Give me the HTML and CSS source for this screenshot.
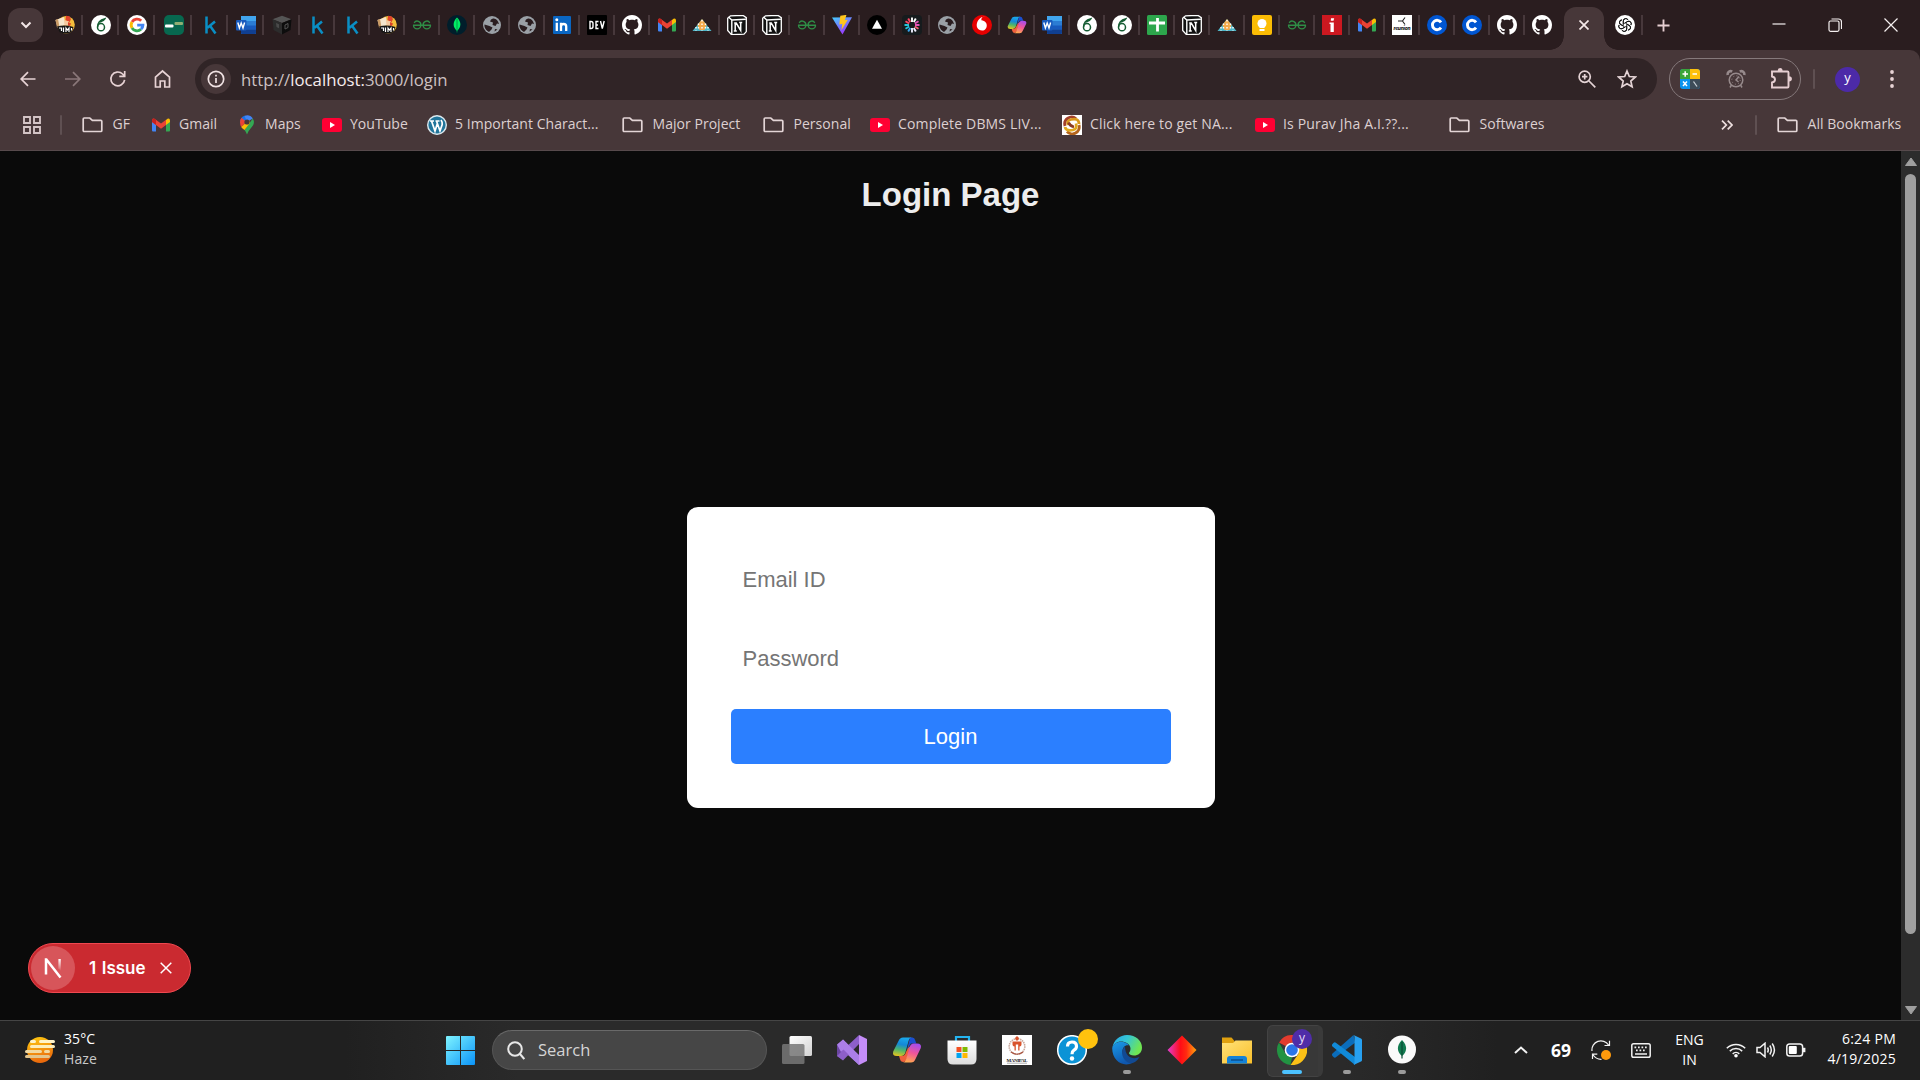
FILE: index.html
```html
<!DOCTYPE html>
<html lang="en">
<head>
<meta charset="utf-8">
<title>Login</title>
<link rel="stylesheet" href="styles.css">
</head>
<body>
<svg class="defs" aria-hidden="true">
  <defs>
    <linearGradient id="g-sky" x1="0" y1="0" x2="1" y2="1"><stop offset="0" stop-color="#7ff4ff"/><stop offset="1" stop-color="#0a93f8"/></linearGradient>
    <linearGradient id="g-sun" x1="0" y1="0" x2="0.3" y2="1"><stop offset="0" stop-color="#ffce12"/><stop offset="1" stop-color="#ea6a0c"/></linearGradient>
    <linearGradient id="g-cop1" x1="0.4" y1="0" x2="0.2" y2="1"><stop offset="0" stop-color="#1aa7ea"/><stop offset=".35" stop-color="#1488d8"/><stop offset=".65" stop-color="#4fb56a"/><stop offset="1" stop-color="#e8c51c"/></linearGradient>
    <linearGradient id="g-cop2" x1="0.7" y1="0" x2="0.4" y2="1"><stop offset="0" stop-color="#a44cf0"/><stop offset=".5" stop-color="#f0559a"/><stop offset="1" stop-color="#ffa650"/></linearGradient>
    <linearGradient id="g-vite" x1="0" y1="0" x2="0.6" y2="1"><stop offset="0" stop-color="#41d1ff"/><stop offset="1" stop-color="#a030fe"/></linearGradient>
    <linearGradient id="g-edge1" x1="0" y1="0" x2="1" y2="0.4"><stop offset="0" stop-color="#26a6ea"/><stop offset=".5" stop-color="#35c6d4"/><stop offset="1" stop-color="#6fe653"/></linearGradient>
    <linearGradient id="g-edge2" x1="0" y1="0" x2="0.4" y2="1"><stop offset="0" stop-color="#1a9be8"/><stop offset="1" stop-color="#0f57ae"/></linearGradient>
    <linearGradient id="g-dia"><stop offset="0" stop-color="#e23dd0"/><stop offset=".45" stop-color="#ff0d16"/><stop offset=".65" stop-color="#ff2a10"/><stop offset="1" stop-color="#ffa60c"/></linearGradient>
    <linearGradient id="g-fold" x1="0" y1="0" x2="1" y2="1"><stop offset="0" stop-color="#ffe27a"/><stop offset="1" stop-color="#f9bf2b"/></linearGradient>
    <linearGradient id="g-bag" x1="0" y1="0" x2="0" y2="1"><stop offset="0" stop-color="#ffffff"/><stop offset="1" stop-color="#dcdcdc"/></linearGradient>
    <linearGradient id="g-n" x1="0" y1="0" x2="0" y2="1"><stop offset="0" stop-color="#fff"/><stop offset="1" stop-color="#fff" stop-opacity="0"/></linearGradient>
    <linearGradient id="g-tv" x1="0" y1="0" x2="1" y2="1"><stop offset="0" stop-color="#fff"/><stop offset="1" stop-color="#d2d2d2"/></linearGradient>
  </defs>

  <symbol id="i-cartoon" viewBox="0 0 20 20"><circle cx="11" cy="9.800" r="8.800" fill="#f3bd3c"/><path d="M.5 5L9 2l1.500 8-8 2.500z" fill="#f5e6cd"/><path d="M.5 5L3 4l1.500 8-2.500.5z" fill="#c99a64"/><path d="M11 .8l3.500.5 1.500 3-1.500 3-4-2z" fill="#e0432b"/><path d="M9 5l5 1.500-.5 4.500-4-.5z" fill="#f4c9a0"/><path d="M13 7l3 1.500-1 2.500-2-.5z" fill="#d8402a"/><path d="M2 11.500q8-2 16.500.5l-2 5q-6 3-12 0z" fill="#151515"/><path d="M4 13h2.500v3M8.500 12.500v4.500M11 17v-4l1.500 2 1.500-2v4M16.500 13v2.500" fill="none" stroke="#fff" stroke-width="1.200"/></symbol>
  <symbol id="i-six" viewBox="0 0 20 20"><circle cx="10" cy="10" r="10" fill="#fff"/><ellipse cx="10" cy="12.200" rx="3.500" ry="3.600" fill="none" stroke="#155c33" stroke-width="1.500"/><path d="M6.600 12C6.500 8 8.500 5 14 3.600 12.500 6.500 10.500 6.500 8.600 7" fill="none" stroke="#155c33" stroke-width="1.400"/></symbol>
  <symbol id="i-google" viewBox="0 0 20 20"><circle cx="10" cy="10" r="10" fill="#fff"/><g fill="none" stroke-width="2.900"><path d="M5 7A5.900 5.900 0 0 1 14.200 5.800" stroke="#ea4335"/><path d="M5 13A5.900 5.900 0 0 1 5 7" stroke="#fbbc05"/><path d="M14 14.300A5.900 5.900 0 0 1 5 13" stroke="#34a853"/><path d="M10.200 10.100h5.700A5.900 5.900 0 0 1 14 14.300" stroke="#4285f4"/></g></symbol>
  <symbol id="i-green" viewBox="0 0 20 20"><rect width="20" height="20" rx="5" fill="#07684f"/><rect x="1" y="9.500" width="8.500" height="3" rx="1" fill="#fff"/><rect x="10.500" y="7" width="8.500" height="3" rx="1" fill="#8fae74"/></symbol>
  <symbol id="i-k" viewBox="0 0 20 20"><path d="M6.500 1.500v17M15 6.500L7.500 12.800M10 10.800L15.500 18.500" fill="none" stroke="#0a8ec4" stroke-width="2.500"/></symbol>
  <symbol id="i-word" viewBox="0 0 20 20"><rect x="5" y="1" width="15" height="18" rx="1" fill="#2b7cd3"/><path d="M5 1h15v5H5z" fill="#41a5ee"/><path d="M5 10.500h15v4H5z" fill="#185abd"/><path d="M5 14.500h15V18q0 1-1 1H6q-1 0-1-1z" fill="#103f91"/><rect y="5" width="10.500" height="10.500" rx="1" fill="#185abd"/><path d="M1.800 7.500l1.600 5.500L5.200 8 7 13l1.600-5.500" fill="none" stroke="#fff" stroke-width="1.400"/></symbol>
  <symbol id="i-cube" viewBox="0 0 20 20"><path d="M10 .8l9.500 3.400L10 8 .5 4.200z" fill="#555"/><path d="M.5 4.200L10 8v11.500L1.500 15z" fill="#2c2c2c"/><path d="M19.500 4.200L10 8v11.500l8.500-4.500z" fill="#0d0d0d"/><path d="M4 8l3 1.200v4L4.500 12z" fill="#4a4a4a"/><path d="M13 10l3-1.500v4L13 14z" fill="none" stroke="#555"/></symbol>
  <symbol id="i-gfg" viewBox="0 0 20 20"><g fill="none" stroke="#2f8d46" stroke-width="1.400"><path d="M1 10.200h18M2.200 7.800A3.600 3.600 0 0 1 8.800 10.200 3.600 3.600 0 0 1 1.500 10.200M17.800 7.800A3.600 3.600 0 0 0 11.200 10.200 3.600 3.600 0 0 0 18.500 10.200"/></g></symbol>
  <symbol id="i-mongo" viewBox="0 0 20 20"><circle cx="10" cy="10" r="10" fill="#001e2b"/><path d="M10 2.500c5 5 4 10 0 13.500-4-3.500-5-8.500 0-13.500z" fill="#00ed64"/><path d="M10 4v13.500" stroke="#008a45" stroke-width=".8"/></symbol>
  <symbol id="i-globe" viewBox="0 0 20 20"><circle cx="10" cy="10" r="9" fill="#9aa0a6"/><path d="M11 3.500c3-.5 5 2 6 5.500l-2-.5-1.500 2.500-3-1 .5-2.500-3-1 1-2zM2.500 9.500l5 1.500 3 1.500-1 2-2.500 2.500C4 15.500 2 12.500 2.500 9.500zM12.500 16.500l.5-2.500 2.500.5" fill="#2a1d20"/></symbol>
  <symbol id="i-linkedin" viewBox="0 0 20 20"><rect x="1" y="1" width="18" height="18" rx="1" fill="#0a66c2"/><path d="M4.800 7.800V16M9 16V7.800M9 16v-4.500q0-2.500 2.600-2.500t2.600 2.500V16" fill="none" stroke="#fff" stroke-width="2.300"/><circle cx="4.800" cy="4.800" r="1.500" fill="#fff"/></symbol>
  <symbol id="i-dev" viewBox="0 0 20 20"><rect width="20" height="20" rx="1" fill="#000"/><path d="M3 6.500v7h1q2 0 2-2v-3q0-2-2-2zM11.500 6.500H9v7h2.500M9 10h2M13.500 6l1.800 7.500L17.200 6" fill="none" stroke="#fff" stroke-width="1.400"/></symbol>
  <symbol id="i-github" viewBox="0 0 16 16"><path fill="#fff" d="M8 0C3.580 0 0 3.580 0 8c0 3.540 2.290 6.530 5.470 7.590.4.070.55-.17.55-.38 0-.19-.01-.82-.01-1.490-2.010.37-2.530-.49-2.690-.94-.09-.23-.48-.94-.82-1.130-.28-.15-.68-.52-.01-.53.63-.01 1.080.58 1.230.82.72 1.210 1.870.87 2.330.66.07-.52.28-.87.51-1.070-1.780-.2-3.640-.89-3.640-3.950 0-.87.31-1.590.82-2.150-.08-.2-.36-1.020.08-2.120 0 0 .67-.21 2.200.82.64-.18 1.320-.27 2-.27s1.360.09 2 .27c1.530-1.040 2.200-.82 2.200-.82.44 1.100.16 1.920.08 2.120.51.56.82 1.270.82 2.150 0 3.070-1.870 3.750-3.650 3.950.29.25.54.73.54 1.480 0 1.070-.01 1.930-.01 2.200 0 .21.15.46.55.38A8.010 8.010 0 0 0 16 8c0-4.420-3.580-8-8-8z"/></symbol>
  <symbol id="i-gmail" viewBox="0 0 20 20"><path d="M1 5v10.500q0 1 1 1h3V7z" fill="#4285f4"/><path d="M19 5v10.500q0 1-1 1h-3V7z" fill="#34a853"/><path d="M15 5l1.500-1.200Q19 3 19 5.500V7l-4 3z" fill="#fbbc04"/><path d="M1 5.500Q1 3 3.500 3.800L10 8.500l5-3.700V10l-5 3.800L5 10 1 7z" fill="#ea4335"/><path d="M1 5.500V7l4 3V4.800l-1.500-1Q1 3 1 5.500z" fill="#c5221f"/></symbol>
  <symbol id="i-pyramid" viewBox="0 0 20 20"><path d="M10 4L19.500 16H.5z" fill="#4fb6c8"/><path d="M10 4l4.500 6-2 5h-5l-2-5z" fill="#f3a94a"/><g stroke="#fff" stroke-width="1.400" stroke-dasharray="1.500 2"><path d="M10 5v11M6.500 8.500v7M13.500 8.500v7M4 12v4M16 12v4"/></g></symbol>
  <symbol id="i-notion" viewBox="0 0 20 20"><path d="M.7 3.200L3.500.8 16 .4l3.300 2.200v14l-2.300 2.600-12.500.5L.7 15.500z" fill="#111" stroke="#fff" stroke-width="1.300"/><path d="M1.500 2l3.300 3 14-.8M4.800 5v14" fill="none" stroke="#fff" stroke-width="1.400"/><path d="M7.200 8h2l4.500 7.500V7.500M8.200 8v8M6.800 16h3M12.200 7.500h3" fill="none" stroke="#fff" stroke-width="1.500"/></symbol>
  <symbol id="i-vite" viewBox="0 0 20 20"><path d="M0 2.500l20-.2L10.500 19.500z" fill="url(#g-vite)"/><path d="M8.300.8l6.200-1-1.700 5.500 3-.5L9.500 15l.8-6.200-3 .6z" fill="#ffc61e"/></symbol>
  <symbol id="i-vercel" viewBox="0 0 20 20"><circle cx="10" cy="10" r="10" fill="#000"/><path d="M10 4.800l5 9H5z" fill="#fff"/></symbol>
  <symbol id="i-burst" viewBox="0 0 20 20"><rect width="20" height="20" rx="4" fill="#161b1d"/><g stroke-width="1.900"><path d="M10 2.500v4.500M13.800 3.500l-2 3.500" stroke="#fff"/><path d="M17.500 10H13M16.500 6.200L12.800 8.500" stroke="#e254b7"/><path d="M16.500 13.800l-3.700-2.300" stroke="#fa5d77"/><path d="M10 17.500V13M13.800 16.500l-2-3.500" stroke="#efefff"/><path d="M2.500 10H7M3.500 13.800l3.700-2.300" stroke="#23c4d8"/><path d="M3.500 6.200l3.700 2.300M6.200 3.500l2 3.500" stroke="#fa4765"/><path d="M6.200 16.500l2-3.500" stroke="#35a4ef"/></g></symbol>
  <symbol id="i-voda" viewBox="0 0 20 20"><circle cx="10" cy="10" r="10" fill="#e60000"/><path d="M13.500 1.200C10.500 1 9 3.300 9.400 5.200 17 6 16 15.500 10.200 15.500 5.500 15.500 4 11.500 5 8 6 4.500 9 1.500 13.500 1.200z" fill="#fff"/></symbol>
  <symbol id="i-copilot" viewBox="0 0 30 30"><path d="M18 2.500h2.500q2 0 2.800 3l1 3h-5.500L15 15z" fill="#1b4fd0"/><path d="M6.500 6q1.300-3.500 4.500-3.500h9q-2.500 0-3.300 3L13.500 17q-1 4-4.500 4H5q-5 0-3.800-4.500z" fill="url(#g-cop1)"/><path d="M7 21h3q3 0 4-4l2-4 2.500-2-4 13.500q-1 2.500-3 2.500-3 0-3.500-3z" fill="#f0603c"/><path d="M23.500 24q-1.300 3.500-4.500 3.500h-8q2 0 3-3L17.500 12.500q1-4 4.500-4h3q5 0 3.800 4.500z" fill="url(#g-cop2)"/></symbol>
  <symbol id="i-sheets" viewBox="0 0 20 20"><rect width="20" height="20" rx="1.500" fill="#2da64c"/><path d="M10.500 3v13.500M2 8h16" stroke="#fff" stroke-width="2.800"/></symbol>
  <symbol id="i-keep" viewBox="0 0 20 20"><rect width="20" height="20" rx="2" fill="#fbbc04"/><circle cx="10" cy="8.500" r="4.500" fill="#fff"/><path d="M7.500 9h5v4h-5zM7.500 14h5v2h-5z" fill="#fff"/></symbol>
  <symbol id="i-info-red" viewBox="0 0 20 20"><rect width="20" height="20" fill="#cc1820"/><path d="M7.500 7.500h4.300V17H8.500V9h-1zM9 3.200h3.200L11.500 5.800H8.800z" fill="#fff"/></symbol>
  <symbol id="i-c" viewBox="0 0 20 20"><circle cx="10" cy="10" r="10" fill="#0056d2"/><path d="M14 7.300A4.700 4.700 0 1 0 14 12.700" fill="none" stroke="#fff" stroke-width="2.900"/></symbol>
  <symbol id="i-gpt" viewBox="0 0 20 20"><circle cx="10" cy="10" r="10" fill="#fff"/><g fill="none" stroke="#111" stroke-width=".9"><path id="gp" d="M8.300 9.500V5.900a2.500 2.500 0 0 1 4.700-1M9.300 8.400l3.200-1.900a2.500 2.500 0 0 1 3.400 3.400"/><use href="#gp" transform="rotate(60 10 10)"/><use href="#gp" transform="rotate(120 10 10)"/><use href="#gp" transform="rotate(180 10 10)"/><use href="#gp" transform="rotate(240 10 10)"/><use href="#gp" transform="rotate(300 10 10)"/></g></symbol>
  <symbol id="i-folder" viewBox="0 0 21 20"><path d="M1.200 4q0-1 1-1h5.600l2.600 2.300h8.400q1 0 1 1v9.200q0 1-1 1H2.200q-1 0-1-1z" fill="none" stroke="#e3d5d6" stroke-width="1.700"/></symbol>
  <symbol id="i-yt" viewBox="0 0 20 20"><rect y="3" width="20" height="14" rx="3" fill="#ff0033"/><path d="M8 7l5 3-5 3z" fill="#fff"/></symbol>
  <symbol id="i-maps" viewBox="0 0 20 20"><path d="M3 7.200A7 7 0 0 1 7.500.8L11 3.500 6 9z" fill="#1a73e8"/><path d="M7.500.8A7 7 0 0 1 15.800 3.500L10 7z" fill="#4285f4"/><path d="M3 7.200Q3 4.500 4.500 2.800L9.500 7l-5.300 5Q3 9.500 3 7.200z" fill="#ea4335"/><path d="M15.800 3.500Q18.500 8 14.800 12 11 16 10 19.500 9 16.500 7.500 15z" fill="#34a853"/><path d="M4.200 12L12 5l1 3-5.500 7Q5.200 13.500 4.200 12z" fill="#fbbc04"/><circle cx="10" cy="7" r="2.600" fill="#473739"/></symbol>
  <symbol id="i-wp" viewBox="0 0 20 20"><circle cx="10" cy="10" r="9.300" fill="#21759b" stroke="#dce9ef" stroke-width="1.400"/><path d="M3 6h4M8.500 6h4M4.500 6L8 16l2.200-7M9.500 6L13 16l2.200-6.500Q15.500 7 14 5" fill="none" stroke="#fff" stroke-width="1.700"/></symbol>
  <symbol id="i-nptel" viewBox="0 0 20 20"><rect width="20" height="20" fill="#fff"/><g fill="none" stroke-width="2.800"><path d="M3 11A7 7 0 0 1 14 3.500" stroke="#a4402a"/><path d="M6 10Q4.500 5.500 9 4.500 17 2.500 17 9" stroke="#d9981c"/><path d="M17 10A7 7 0 0 1 5 16.500" stroke="#b5651c"/><path d="M14 8.500Q15.500 14 11 15 4 16.500 3 12" stroke="#e0a820"/><path d="M6.500 7.500Q8 11 12 12" stroke="#8c3a22"/></g></symbol>
</svg>

<header class="browser">
  <div class="tabstrip">
    <button class="tab-search"><svg viewBox="0 0 12 8"><path d="M1.500 1.500L6 6l4.500-4.500"/></svg></button>
    <div class="tabs">
      <i class="tab wide"><svg><use href="#i-cartoon"/></svg></i><i class="tab wide"><svg><use href="#i-six"/></svg></i><i class="tab wide"><svg><use href="#i-google"/></svg></i><i class="tab wide"><svg><use href="#i-green"/></svg></i><i class="tab wide"><svg><use href="#i-k"/></svg></i><i class="tab wide"><svg><use href="#i-word"/></svg></i><i class="tab wide"><svg><use href="#i-cube"/></svg></i>
      <i class="tab"><svg><use href="#i-k"/></svg></i><i class="tab"><svg><use href="#i-k"/></svg></i><i class="tab"><svg><use href="#i-cartoon"/></svg></i><i class="tab"><svg><use href="#i-gfg"/></svg></i><i class="tab"><svg><use href="#i-mongo"/></svg></i><i class="tab"><svg><use href="#i-globe"/></svg></i><i class="tab"><svg><use href="#i-globe"/></svg></i><i class="tab"><svg><use href="#i-linkedin"/></svg></i><i class="tab"><svg><use href="#i-dev"/></svg></i><i class="tab"><svg><use href="#i-github"/></svg></i><i class="tab"><svg><use href="#i-gmail"/></svg></i><i class="tab"><svg><use href="#i-pyramid"/></svg></i><i class="tab"><svg><use href="#i-notion"/></svg></i><i class="tab"><svg><use href="#i-notion"/></svg></i><i class="tab"><svg><use href="#i-gfg"/></svg></i><i class="tab"><svg><use href="#i-vite"/></svg></i><i class="tab"><svg><use href="#i-vercel"/></svg></i><i class="tab"><svg><use href="#i-burst"/></svg></i><i class="tab"><svg><use href="#i-globe"/></svg></i><i class="tab"><svg><use href="#i-voda"/></svg></i><i class="tab"><svg><use href="#i-copilot"/></svg></i><i class="tab"><svg><use href="#i-word"/></svg></i><i class="tab"><svg><use href="#i-six"/></svg></i><i class="tab"><svg><use href="#i-six"/></svg></i><i class="tab"><svg><use href="#i-sheets"/></svg></i><i class="tab"><svg><use href="#i-notion"/></svg></i><i class="tab"><svg><use href="#i-pyramid"/></svg></i><i class="tab"><svg><use href="#i-keep"/></svg></i><i class="tab"><svg><use href="#i-gfg"/></svg></i><i class="tab"><svg><use href="#i-info-red"/></svg></i><i class="tab"><svg><use href="#i-gmail"/></svg></i><i class="tab"><svg viewBox="0 0 20 20"><rect width="20" height="20" fill="#fff"/><path d="M13 2.500L10.500 6 13 9.500M6 6h4.500" fill="none" stroke="#222" stroke-width="1.100"/><text x="10" y="15" text-anchor="middle" font-family="Inter, sans-serif" font-weight="800" font-size="4.800" textLength="17" fill="#111">reunion</text></svg></i><i class="tab"><svg><use href="#i-c"/></svg></i><i class="tab"><svg><use href="#i-c"/></svg></i><i class="tab"><svg><use href="#i-github"/></svg></i><i class="tab plain"><svg><use href="#i-github"/></svg></i>
    </div>
    <div class="tab-active"><svg viewBox="0 0 10 10"><path d="M.5.500l9 9M9.500.500l-9 9"/></svg></div>
    <i class="tab last"><svg><use href="#i-gpt"/></svg></i>
    <svg class="new-tab" viewBox="0 0 14 14"><path d="M7 .5v13M.5 7h13"/></svg>
    <div class="window-buttons">
      <svg viewBox="0 0 14 14"><path d="M.5 6h13"/></svg>
      <svg viewBox="0 0 14 14"><path d="M3.500 1h7q3 0 3 3v7" fill="none"/><rect x="1" y="3" width="10" height="10.300" rx="1.500" fill="none"/></svg>
      <svg viewBox="0 0 14 14"><path d="M.5.500l13 13M13.500.500l-13 13"/></svg>
    </div>
  </div>

  <div class="chrome-panel">
    <div class="toolbar">
      <nav class="nav-buttons">
        <svg viewBox="0 0 20 20"><path d="M17.500 10H3.500M10 3.200L3.200 10l6.800 6.800"/></svg>
        <svg class="dim" viewBox="0 0 20 20"><path d="M2 10h14.500M10 3.200l6.800 6.800-6.800 6.800"/></svg>
        <svg viewBox="0 0 20 20"><path d="M16.600 10.800A6.900 6.900 0 1 1 14.600 5L16.500 7M16.700 2v5.400h-5.400"/></svg>
        <svg viewBox="0 0 20 20"><path d="M2.500 8.200L9.500 2l7 6.200V18h-4.700v-6H7.200v6H2.500z"/></svg>
      </nav>
      <div class="omnibox">
        <span class="site-info"><svg viewBox="0 0 18 18"><circle cx="9" cy="9" r="7.700"/><path d="M9 8v5M9 4.700v1.800"/></svg></span>
        <span class="url">http://<b>localhost:</b>3000/login</span>
        <svg class="omni-icon zoom-icon" viewBox="0 0 20 20"><circle cx="7.700" cy="7.700" r="5.600"/><path d="M12 12l6.300 6.300M5 7.700h5.400M7.700 5v5.400"/></svg>
        <svg class="omni-icon" viewBox="0 0 20 20"><path d="M10 2l2.300 5.500 6 .5-4.500 4 1.300 5.800L10 14.700l-5.100 3.100L6.200 12 1.700 8l6-.5z"/></svg>
      </div>
      <div class="extensions">
        <svg viewBox="0 0 22 22"><rect x="1" y="1" width="20" height="20" rx="3" fill="#0a93ee"/><path d="M1 11V4q0-3 3-3h7v10z" fill="#3aa53a"/><path d="M11 1h7q3 0 3 3v7H11z" fill="#fdc00c"/><path d="M11 11h10v7q0 3-3 3h-7z" fill="#3d4c58"/><path d="M3.500 6h5.500M6.200 3.300v5.500M13.500 6h4.500M4 13.500l4 4.500M8 13.500L4 18" stroke="#fff" stroke-width="1.500"/><path d="M14.500 13.500l3.500 5" stroke="#c9d2d8" stroke-width="1.300"/></svg>
        <svg class="clock-ext" viewBox="0 0 20 20"><circle cx="10" cy="11" r="6.800"/><path d="M13 7.500l-3 3.500 2.500 2M5.500 16L4 18.500M14.500 16l1.500 2.500"/><path d="M1.800 6a3 3 0 0 1 4.400-3.400M18.200 6a3 3 0 0 0-4.400-3.400" stroke-width="2.600"/><circle cx="10" cy="11" r="4.200" stroke-width="1" stroke-dasharray="1 2.300"/></svg>
        <svg class="puzzle" viewBox="0 0 22 22"><path d="M2 4.500h15.500q1 0 1 1v14q0 1-1 1H2v-5q3-.5 3-3t-3-3z"/><path d="M7.800 4q0-3 2.400-3t2.400 3zM19 9.200q2.900 0 2.900 2.600T19 14.400z" class="solid"/></svg>
      </div>
      <span class="bar-sep"></span>
      <span class="avatar">y</span>
      <svg class="menu-dots" viewBox="0 0 4 18"><circle cx="2" cy="2" r="1.900"/><circle cx="2" cy="9" r="1.900"/><circle cx="2" cy="16" r="1.900"/></svg>
    </div>

    <div class="bookmarks">
      <svg class="apps" viewBox="0 0 18 18"><path d="M1 1h6v6H1zM11 1h6v6h-6zM1 11h6v6H1zM11 11h6v6h-6z"/></svg>
      <span class="bar-sep"></span>
      <span class="bm folder"><svg><use href="#i-folder"/></svg>GF</span>
      <span class="bm"><svg><use href="#i-gmail"/></svg>Gmail</span>
      <span class="bm"><svg><use href="#i-maps"/></svg>Maps</span>
      <span class="bm"><svg><use href="#i-yt"/></svg>YouTube</span>
      <span class="bm"><svg><use href="#i-wp"/></svg>5 Important Charact...</span>
      <span class="bm folder"><svg><use href="#i-folder"/></svg>Major Project</span>
      <span class="bm folder"><svg><use href="#i-folder"/></svg>Personal</span>
      <span class="bm spaced"><svg><use href="#i-yt"/></svg>Complete DBMS LIV...</span>
      <span class="bm spaced"><svg><use href="#i-nptel"/></svg>Click here to get NA...</span>
      <span class="bm spaced"><svg><use href="#i-yt"/></svg>Is Purav Jha A.I.??...</span>
      <span class="bm folder"><svg><use href="#i-folder"/></svg>Softwares</span>
      <svg class="more" viewBox="0 0 12 10"><path d="M1 .7L5.300 5 1 9.300M6.700.700L11 5 6.700 9.300"/></svg>
      <span class="bar-sep"></span>
      <span class="bm folder"><svg><use href="#i-folder"/></svg>All Bookmarks</span>
    </div>
  </div>
</header>

<div class="viewport">
  <main class="page">
    <h1>Login Page</h1>
    <div class="center">
      <form class="card">
        <input type="email" placeholder="Email ID">
        <input type="password" placeholder="Password">
        <button type="button">Login</button>
      </form>
    </div>
    <div class="issue">
      <span class="issue-logo"><svg viewBox="0 0 20 22"><path d="M3 17.500V2.500h.4L17.500 20.500" fill="none" stroke="#fff" stroke-width="2.500"/><path d="M15.400 2h2.400v12l-2.400-2.800z" fill="url(#g-n)"/></svg></span>
      <span class="issue-text">1 Issue</span>
      <svg class="issue-close" viewBox="0 0 12 12"><path d="M.7.700l10.600 10.600M11.300.700L.7 11.300"/></svg>
    </div>
  </main>
  <div class="scrollbar">
    <svg viewBox="0 0 14 10"><path d="M7 1l5.500 7.500h-11z"/></svg>
    <div class="thumb"></div>
    <svg viewBox="0 0 14 10"><path d="M7 9l5.500-7.500h-11z"/></svg>
  </div>
</div>

<footer class="taskbar">
  <div class="weather">
    <svg viewBox="0 0 30 30"><circle cx="15" cy="15" r="13" fill="url(#g-sun)"/><g stroke-linecap="round" stroke-width="3"><path d="M6.500 6.500h3M15.500 6.500h13" stroke="#fff3c9"/><path d="M6.500 11.500h22" stroke="#fdeebb"/><path d="M1.500 16.500h14M20.500 16.500h3" stroke="#f2d9a0"/><path d="M1.500 21.500h22" stroke="#e3c58c"/></g></svg>
    <div><p>35°C</p><p class="soft">Haze</p></div>
  </div>
  <svg class="start" viewBox="0 0 29 29"><path d="M1 0h13v14H0V1q0-1 1-1zM15 0h13q1 0 1 1v13H15zM0 15h14v14H1q-1 0-1-1zM15 15h14v13q0 1-1 1H15z" fill="url(#g-sky)"/></svg>
  <div class="search"><svg viewBox="0 0 18 19"><circle cx="8" cy="8" r="6.800"/><path d="M13 13l4.300 5"/></svg>Search</div>
  <div class="apps-row">
    <span class="app"><svg viewBox="0 0 30 30"><rect x="7.500" y="1" width="22.500" height="20" rx="1.500" fill="url(#g-tv)"/><rect y="9" width="22.500" height="20" rx="1.500" fill="#777" opacity=".85"/></svg></span>
    <span class="app"><svg viewBox="0 0 30 30"><path d="M0 10l6-5v20l-6-4z" fill="#6a45a0"/><path d="M6 5l3.500 3L12 12.500 6 18 4 15z" fill="#8456bd"/><path d="M0 9.500L6 4.500 22 21v9L6 15.500 4 17z" fill="#ab7ee8"/><path d="M6 25.500L0 21l6-6L22 0v9z" fill="#8d5fc9"/><path d="M6 4.500L22 20v10L4 12z" fill="#ab7ee8"/><path d="M22 0l8 4v22l-8 4z" fill="#c58df8"/></svg></span>
    <span class="app"><svg><use href="#i-copilot"/></svg></span>
    <span class="app"><svg viewBox="0 0 30 30"><path d="M9 7V2h13v5" fill="none" stroke="#24b4f0" stroke-width="2.200"/><path d="M.5 5.500h29V24q0 5.500-5.500 5.500H6Q.5 29.500.5 24z" fill="url(#g-bag)"/><path d="M9.500 12h5v5h-5z" fill="#f25022"/><path d="M15.500 12h5v5h-5z" fill="#7fba00"/><path d="M9.500 18h5v5h-5z" fill="#00a4ef"/><path d="M15.500 18h5v5h-5z" fill="#ffb900"/></svg></span>
    <span class="app"><svg viewBox="0 0 30 30"><rect width="30" height="30" fill="#fff"/><circle cx="15" cy="11.500" r="7.800" fill="none" stroke="#c9a79b" stroke-width="1.600" stroke-dasharray="1.500 .7"/><path d="M10.500 6.500h9v3q0 2-2 2v4h-1.300V9.500h-2.400v6h-1.300v-4q-2 0-2-2zM13 3l2-2 2 2-1 2.500h-2z" fill="#d9532c"/><path d="M9 17q6 4.500 12 0" fill="none" stroke="#a95441" stroke-width="1.200"/><text x="15" y="26.500" text-anchor="middle" font-family="Liberation Serif, serif" font-weight="700" font-size="5" textLength="21" fill="#222">MANIPAL</text><path d="M5 28.200h20" stroke="#999" stroke-width=".8"/></svg></span>
    <span class="app"><svg viewBox="0 0 30 30"><circle cx="15" cy="15" r="14.300" fill="#0b93d6" stroke="#fff" stroke-width="1.500"/><path d="M10.500 11.500Q10.500 7 15 7t4.500 4.200q0 2.500-2.500 4-2 1.300-2 4" fill="none" stroke="#fff" stroke-width="3.200"/><circle cx="15" cy="23.500" r="2.200" fill="#fff"/></svg><i class="badge yellow"></i></span>
    <span class="app run"><svg viewBox="0 0 30 30"><path d="M.3 13C1.500 5 8 0 15 0c9 0 15 6 15 12.500C30 18 26 20.500 22 20.500c-3 0-5-1.200-5-2.300 0-1 1.500-1.700 1.500-4.500C18.500 9 13 6.500 9 6.500 5 6.500 1.800 9 .3 13z" fill="url(#g-edge1)"/><path d="M.2 13C1.500 9 5 6.800 9 6.800c3 0 6.500 1.200 8 3.500-4-1-7 2.500-6.500 7C11 23 16 27 21 27.500 12 33 0 26.500.2 13z" fill="url(#g-edge2)"/><path d="M13 11.500C8 15.500 9.500 25 18 28.500q6-.5 9.500-6.500c-6 3-14.500.500-14.500-10.500z" fill="#124a93"/></svg></span>
    <span class="app"><svg viewBox="0 0 30 30"><path d="M15 .5L29.500 15 15 29.500.5 15z" fill="url(#g-dia)"/></svg></span>
    <span class="app"><svg viewBox="0 0 30 30"><path d="M0 2.500h9.500l3 3.500v4H0z" fill="#dfa00f"/><path d="M0 8h11l2.500-2.500H30V28.500H0z" fill="url(#g-fold)"/><path d="M5 28.500V24q0-3 3-3h14q3 0 3 3v4.500z" fill="#1482d8"/><path d="M9 25h12" stroke="#0b4f8f" stroke-width="1.500"/></svg></span>
    <span class="app run active"><svg viewBox="0 0 30 30"><path d="M2 7.500A15 15 0 0 1 28 7.500H15L8.500 11z" fill="#e33b2e"/><path d="M2 7.500L8.500 18.700 15 22.500 13.500 30A15 15 0 0 1 2 7.500z" fill="#229342"/><path d="M28 7.500A15 15 0 0 1 13.500 30L21.500 18.700V11L15 7.500z" fill="#fbc116"/><circle cx="15" cy="15" r="7.300" fill="#fff"/><circle cx="15" cy="15" r="5.800" fill="#2a74e8"/></svg><i class="badge violet">y</i></span>
    <span class="app run"><svg viewBox="0 0 30 30"><path d="M.5 18.500L21.500 0 23 7.800 3.500 22.500q-1 .5-1.800-.3L.3 20.800q-.8-1.300.2-2.300z" fill="#0b6dbb"/><path d="M.5 11.500L23 30V22L3.500 7.500q-1-.5-1.800.3L.3 9.200q-.8 1.300.2 2.300z" fill="#118ad8"/><path d="M21.500 0l7.500 3.500q1 .5 1 1.500v20q0 1-1 1.500L21.500 30q1-.5 1-2V2q0-1.500-1-2z" fill="#27a0f0"/></svg></span>
    <span class="app run"><svg viewBox="0 0 30 30"><circle cx="15" cy="14.500" r="14" fill="#fafafa"/><path d="M15 5c6 6 5 12 0 16-5-4-6-10 0-16z" fill="#127a50"/><path d="M15 7v16.500" stroke="#0a4b34" stroke-width="1.200"/></svg></span>
  </div>
  <div class="tray">
    <svg class="chev" viewBox="0 0 14 8"><path d="M1 7l6-5.500L13 7"/></svg>
    <b>69</b>
    <svg class="sync" viewBox="0 0 20 20"><path d="M1 11A9 9 0 0 1 17.500 5M18.500.700V5.500h-5M1.500 19v-4.800h4.800M1.800 14.500Q5 19.500 10.500 19.300" fill="none"/><circle cx="15" cy="15" r="5" fill="#ff9a0c" stroke="none"/></svg>
    <svg class="kb" viewBox="0 0 20 15"><rect x=".8" y=".8" width="18.400" height="13.400" rx="1.800"/><path d="M3.500 4.300h1.700M7 4.300h1.700M10.500 4.300h1.700M14 4.300h1.700M5 7.300h1.700M8.500 7.300h1.700M12 7.300h1.700M4 11h12" stroke-width="1.700"/></svg>
    <div class="lang"><p>ENG</p><p>IN</p></div>
    <svg class="wifi" viewBox="0 0 20 16"><path d="M.8 6.200a13 13 0 0 1 18.400 0M3.800 9.100a8.800 8.800 0 0 1 12.400 0M6.700 11.900a4.700 4.700 0 0 1 6.600 0"/><circle cx="10" cy="13.800" r="1.800" fill="#fff" stroke="none"/></svg>
    <svg class="vol" viewBox="0 0 20 16"><path d="M1 5.500h3L9 1.200v13.600L4 10.500H1zM11.500 5.500q1.500 2.500 0 5M13.800 3.500q3 4.500 0 9M16.200 1.500q4.500 6.500 0 13"/></svg>
    <svg class="bat" viewBox="0 0 20 14"><rect x=".8" y="1" width="15.800" height="12" rx="2.800"/><rect x="2.800" y="3" width="8" height="8" rx="1" fill="#fff" stroke="none"/><path d="M18.200 4.800v4.400" stroke-width="2.400"/></svg>
    <div class="clock"><p>6:24 PM</p><p>4/19/2025</p></div>
  </div>
</footer>
</body>
</html>
```

FILE: styles.css
```css
* { box-sizing: border-box; margin: 0; padding: 0; }
body {
  width: 1920px;
  height: 1080px;
  overflow: hidden;
  display: flex;
  flex-direction: column;
  background: #0a0a0a;
  font-family: "Open Sans", "Noto Sans", sans-serif;
}
svg { display: block; flex: none; }
.defs { position: absolute; width: 0; height: 0; }

/* Browser frame */
.browser { height: 151px; background: #2a1d1f; }
.tabstrip { display: flex; height: 50px; align-items: center; }
.tab-search {
  width: 35px; height: 34px; margin-left: 8px; margin-right: 4px;
  border: 0; border-radius: 12px; background: #473739;
  display: grid; place-items: center;
}
.tab-search svg { width: 12px; height: 8px; fill: none; stroke: #f3e6e7; stroke-width: 2; }
.tabs { display: flex; }
.tab {
  width: 35px; height: 20px; padding-right: 1px;
  display: flex; justify-content: center;
  background: linear-gradient(#47383b, #47383b) right / 2px 20px no-repeat;
}
.tab.wide { width: 36.170px; padding-right: 0; }
.tab.plain { background: none; }
.tab.last { width: 39px; padding: 0; }
.tab svg { width: 20px; height: 20px; overflow: visible; }
.tab-active {
  position: relative; width: 40px; height: 43px; align-self: flex-end;
  margin-left: 4px; border-radius: 12px 12px 0 0; background: #473739;
  display: grid; place-items: center; padding-bottom: 7px;
}
.tab-active svg { width: 10px; height: 10px; stroke: #f5eaea; stroke-width: 1.700; }
.tab-active::before, .tab-active::after {
  content: ""; position: absolute; bottom: 0; width: 14px; height: 14px;
}
.tab-active::before { left: -14px; background: radial-gradient(circle at 0 0, transparent 13.500px, #473739 14px); }
.tab-active::after { right: -14px; background: radial-gradient(circle at 100% 0, transparent 13.500px, #473739 14px); }
.tab.last svg { margin-left: 3px; }
.new-tab { width: 13px; height: 13px; margin-left: 14px; stroke: #e6cfd2; stroke-width: 2; }
.window-buttons { display: flex; gap: 42px; margin-left: auto; margin-right: 22px; padding-bottom: 1px; }
.window-buttons svg { width: 14px; height: 14px; stroke: #f5f0f0; stroke-width: 1.200; }

.chrome-panel {
  height: 101px; padding-top: 8px; background: #473739;
  border-radius: 10px 10px 0 0; border-bottom: 1px solid #574a4c;
}
.toolbar { display: flex; height: 42px; align-items: center; }
.nav-buttons { display: flex; gap: 25px; padding-left: 18px; width: 195px; margin-top: -1px; }
.nav-buttons svg { width: 20px; height: 20px; fill: none; stroke: #e8d3d5; stroke-width: 1.700; }
.nav-buttons .dim { stroke: #8a7779; }
.omnibox {
  width: 1462px; height: 42px; border-radius: 21px; background: #302426;
  display: flex; align-items: center; padding: 0 20px 0 6px;
}
.site-info { width: 30px; height: 30px; border-radius: 50%; background: #473739; display: grid; place-items: center; }
.site-info svg { width: 18px; height: 18px; fill: none; stroke: #f0e2e3; stroke-width: 1.700; }
.url { flex: 1; margin-left: 10px; padding-top: 1px; font-size: 16.800px; color: #cdc1c2; line-height: 24px; }
.url b { font-weight: 400; color: #f6eced; }
.omni-icon { width: 20px; height: 20px; fill: none; stroke: #e4d3d5; stroke-width: 1.700; }
.zoom-icon { margin-right: 20px; }
.extensions {
  width: 132px; height: 42px; margin-left: 12px; border: 1px solid #85797b; border-radius: 21px;
  display: flex; align-items: center; justify-content: space-between; padding: 0 8px 0 9px;
}
.extensions svg { width: 22px; height: 22px; }
.extensions .clock-ext { width: 20px; height: 20px; fill: none; stroke: #96898b; stroke-width: 1.500; }
.extensions .puzzle { fill: none; stroke: #e6ced1; stroke-width: 1.900; margin-top: -2px; }
.extensions .puzzle .solid { fill: #e6ced1; stroke: none; }
.bar-sep { width: 2px; height: 20px; background: #5f5052; border-radius: 1px; }
.toolbar .bar-sep { margin-left: 12px; }
.avatar {
  width: 25px; height: 25px; margin-left: 20px; border-radius: 50%; background: #4c2aa8;
  color: #fff; font-size: 13px; line-height: 21px; text-align: center;
}
.menu-dots { width: 4px; height: 18px; margin-left: 30px; fill: #e8d3d5; }

.bookmarks {
  display: grid; height: 50px; padding-left: 23px; align-items: center; font-size: 14px; color: #ddd0d1;
  grid-template-columns: 37px 22px 69px 86px 85px 105px 195px 141px 107px 192px 193px 194px 272px 34px 22px 140px;
}
.bookmarks .apps { width: 18px; height: 18px; fill: none; stroke: #d3c4c6; stroke-width: 1.900; }
.bm { display: flex; align-items: center; gap: 8px; white-space: nowrap; height: 20px; line-height: 18px; align-items: flex-start; letter-spacing: .04px; }
.bm.spaced { letter-spacing: .16px; }
.bm svg { width: 20px; height: 20px; }
.bm.folder { gap: 9.500px; }
.bm.folder svg { width: 21px; }
.bookmarks .more { width: 12px; height: 10px; fill: none; stroke: #efe0e1; stroke-width: 1.700; }

/* Page */
.viewport { display: flex; height: 869px; }
.page { position: relative; flex: 1; font-family: "Liberation Sans", Arial, sans-serif; display: flex; flex-direction: column; }
.page h1 { padding-top: 22px; text-align: center; font-size: 33px; line-height: 44px; font-weight: 700; color: #ededed; }
.center { flex: 1; display: flex; justify-content: center; align-items: flex-start; padding-top: 290px; }
.card {
  width: 528px; height: 301px; padding: 44px; border-radius: 11px; background: #fff;
  display: flex; flex-direction: column; gap: 24px;
}
.card input {
  height: 55px; padding: 2px 12px 0; border: 0; background: #fff;
  font: 22px "Liberation Sans", Arial, sans-serif;
}
.card input::placeholder { color: #757575; }
.card button {
  height: 55px; border: 0; border-radius: 5px; background: #2b7fff; color: #fff;
  font: 22px "Liberation Sans", Arial, sans-serif;
}
.issue {
  position: absolute; left: 28px; top: 792px; width: 163px; height: 50px;
  border-radius: 25px; border: 1px solid #f04850; background: #ca2a30;
  display: flex; align-items: center; padding-left: 2px;
}
.issue-logo { width: 44px; height: 44px; border-radius: 50%; background: #d7555a; display: grid; place-items: center; }
.issue-logo svg { width: 20px; height: 22px; }
.issue-text { margin-left: 14px; width: 58px; font: 600 17px/20px Inter, sans-serif; word-spacing: 1.500px; letter-spacing: -.05px; color: #fff; white-space: nowrap; }
.issue-close { width: 12px; height: 12px; margin-left: 13px; stroke: #fff; stroke-width: 1.500; }
.scrollbar { width: 19px; background: #2c2c2c; display: flex; flex-direction: column; align-items: center; padding: 6px 0 5px; }
.scrollbar svg { width: 14px; height: 10px; fill: #9f9f9f; stroke: #9f9f9f; stroke-linejoin: round; }
.thumb { width: 11px; height: 760px; margin-top: 7px; margin-bottom: auto; border-radius: 6px; background: #9f9f9f; }

/* Taskbar */
.taskbar {
  height: 60px; border-top: 1px solid #454545; padding-bottom: 1px;
  background: linear-gradient(90deg, #202020, #202020 18%, #2a2a2a 27%, #2a2a2a 70%, #202020 78%);
  display: flex; align-items: center; font-size: 14px; line-height: 20px; color: #fff;
}
.weather { width: 446px; padding-left: 25px; display: flex; align-items: center; gap: 9px; }
.weather svg { width: 30px; height: 30px; }
.weather p { margin-top: -1px; margin-bottom: 1px; letter-spacing: .1px; }
.soft { color: #c9c9c9; }
.start { width: 29px; height: 29px; }
.search {
  width: 275px; height: 40px; margin-left: 17px; border-radius: 20px;
  background: #464646; border: 1px solid #555; border-top-color: #696969;
  display: flex; align-items: center; gap: 13px; padding-left: 14px; font-size: 16.500px; color: #d5d5d5;
}
.search svg { width: 18px; height: 19px; fill: none; stroke: #e8e8e8; stroke-width: 2; }
.apps-row { display: flex; margin-left: 2px; }
.app { position: relative; width: 55px; height: 58px; display: grid; place-items: center; }
.app > svg { width: 30px; height: 30px; position: relative; }
.app.run::after {
  content: ""; position: absolute; left: 24px; bottom: 5px; width: 8px; height: 4px;
  border-radius: 2px; background: #9b9b9b;
}
.app.run.active::after { left: 18px; width: 20px; background: #4cc2ff; }
.app.active::before {
  content: ""; position: absolute; left: 3px; top: 4px; width: 50px; height: 50px;
  border-radius: 6px; background: #383838; border: 1px solid #434343; border-right-width: 5px; border-right-color: #3a3a3a;
}
.badge { position: absolute; right: 1.500px; top: 8px; width: 20px; height: 20px; border-radius: 50%; }
.badge.yellow { background: #ffc20e; }
.badge.violet { right: 7px; background: #4f2da8; color: #e7defa; font-size: 12px; line-height: 17px; text-align: center; font-style: normal; }
.tray {
  margin-left: auto; margin-right: 24px; display: grid; align-items: center; justify-items: center;
  grid-template-columns: 40px 40px 40px 40px 57px 3px 30px 30px 30px 85px;
}
.tray svg { fill: none; stroke: #f2f2f2; stroke-width: 1.500; }
.tray b { font: 700 17.500px/20px "Open Sans", sans-serif; }
.tray .chev { width: 14px; height: 8px; stroke-width: 2; }
.tray .sync { width: 20px; height: 20px; stroke-width: 1.200; }
.kb { width: 20px; height: 15px; }
.lang { text-align: center; }
.wifi { grid-column: 7; width: 20px; height: 16px; }
.vol { width: 20px; height: 16px; }
.bat { width: 20px; height: 14px; }
.clock { justify-self: end; text-align: right; white-space: nowrap; letter-spacing: .25px; }
.clock p { margin-top: -1px; margin-bottom: 1px; }
```
